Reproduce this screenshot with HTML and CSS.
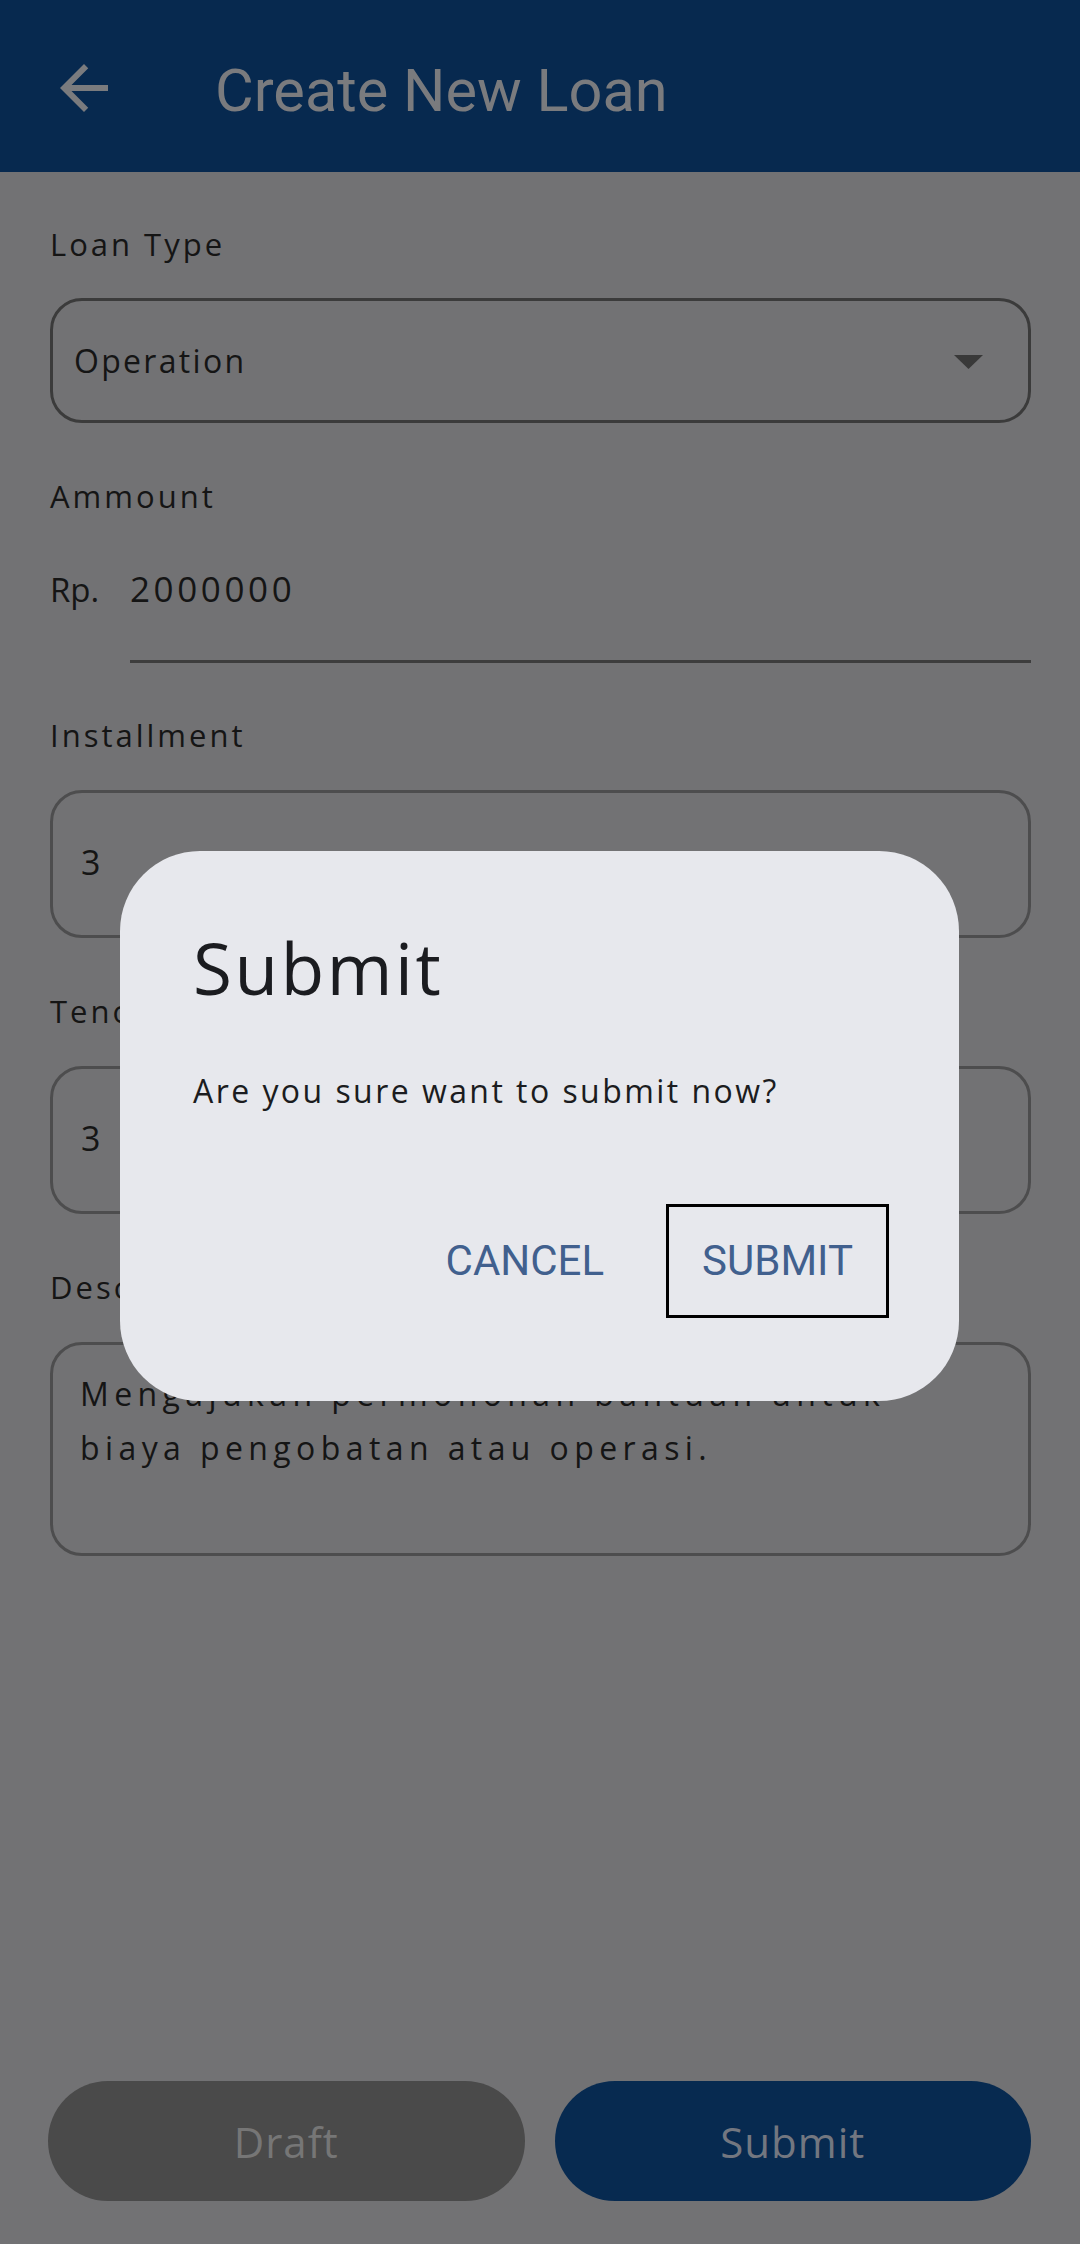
FILE: index.html
```html
<!DOCTYPE html>
<html lang="id">
<head>
<meta charset="utf-8">
<title>Create New Loan</title>
<link rel="stylesheet" href="styles.css">
</head>
<body>
<div class="screen">
  <header class="appbar">
    <svg class="back" viewBox="0 0 24 24" aria-hidden="true"><path d="M20 11H7.83l5.59-5.59L12 4l-8 8 8 8 1.41-1.41L7.83 13H20v-2z"/></svg>
    <h1 class="title">Create New Loan</h1>
  </header>

  <main class="form">
    <div class="label first">Loan Type</div>
    <div class="select">
      <span class="value">Operation</span>
      <svg class="caret" viewBox="0 0 29 14" aria-hidden="true"><polygon points="0,0 29,0 14.5,14"/></svg>
    </div>

    <div class="label">Ammount</div>
    <div class="amount">
      <span class="prefix">Rp.</span>
      <span class="amount-input">2000000</span>
    </div>

    <div class="label">Installment</div>
    <div class="field"><span class="num">3</span></div>

    <div class="label">Tenor</div>
    <div class="field"><span class="num">3</span></div>

    <div class="label">Description</div>
    <div class="textarea">Mengajukan permohonan bantuan untuk biaya pengobatan atau operasi.</div>
  </main>

  <footer class="actions">
    <button class="btn btn-draft">Draft</button>
    <button class="btn btn-submit">Submit</button>
  </footer>

  <div class="dialog" role="dialog">
    <h2 class="dialog-title">Submit</h2>
    <p class="dialog-text">Are you sure want to submit now?</p>
    <div class="dialog-actions">
      <button class="text-btn">CANCEL</button>
      <button class="text-btn outlined">SUBMIT</button>
    </div>
  </div>
</div>
</body>
</html>
```
FILE: styles.css
```css
* { box-sizing: border-box; }
html, body { margin: 0; padding: 0; }
body {
  width: 1080px;
  height: 2244px;
  overflow: hidden;
  background: #727274;
  font-family: "Open Sans", "Noto Sans", sans-serif;
}
.screen {
  position: relative;
  width: 1080px;
  height: 2244px;
  display: flex;
  flex-direction: column;
  background: #727274;
}

/* App bar */
.appbar {
  height: 172px;
  flex: none;
  background: #07294f;
  display: flex;
  align-items: center;
  padding-left: 48px;
}
.back {
  width: 72px;
  height: 72px;
  margin-top: 4px;
  fill: #7a7b7e;
}
.title {
  margin: 9px 0 0 95px;
  font-family: Roboto, "Liberation Sans", sans-serif;
  font-weight: 400;
  font-size: 59.5px;
  line-height: 70px;
  color: #7a7b7e;
}

/* Form */
.form {
  flex: 1;
  padding: 0 49px 0 50px;
  color: #151515;
}
.label {
  font-size: 31px;
  line-height: 40px;
  letter-spacing: 3px;
  margin-top: 53px;
  margin-bottom: 35px;
}
.label.first { margin-top: 52px; margin-bottom: 34px; }

.select {
  height: 125px;
  border: 3px solid #3b3b3b;
  border-radius: 32px;
  display: flex;
  align-items: center;
  justify-content: space-between;
  padding: 0 45px 0 21px;
}
.value {
  font-size: 32px;
  line-height: 40px;
  letter-spacing: 2.3px;
}
.caret {
  width: 29px;
  height: 14px;
  margin-top: 3px;
  fill: #393939;
}

.amount {
  display: flex;
  align-items: baseline;
  margin-top: 49px;
}
.prefix {
  width: 80px;
  font-size: 33px;
  line-height: 48px;
}
.amount-input {
  flex: 1;
  font-size: 35px;
  line-height: 48px;
  letter-spacing: 3.6px;
  padding-bottom: 47px;
  border-bottom: 3px solid #3d3d3d;
}
.amount + .label { margin-top: 52px; }

.field {
  height: 148px;
  border: 3px solid #4d4d4e;
  border-radius: 32px;
  display: flex;
  align-items: center;
  padding: 0 28px 4px 28px;
}
.num {
  font-size: 34px;
  line-height: 40px;
}

.textarea {
  height: 214px;
  border: 3px solid #4d4d4e;
  border-radius: 32px;
  padding: 22px 70px 0 27px;
  font-size: 32px;
  line-height: 54px;
  letter-spacing: 5.4px;
}

/* Bottom buttons */
.actions {
  flex: none;
  display: flex;
  gap: 30px;
  padding: 0 49px 43px 48px;
}
.btn {
  flex: 1;
  height: 120px;
  border: none;
  border-radius: 60px;
  font-family: "Open Sans", "Noto Sans", sans-serif;
  font-size: 42px;
  letter-spacing: 1px;
  padding: 0;
}
.btn-draft { background: #4a4a4a; color: #767676; }
.btn-submit { background: #072a50; color: #737780; }

/* Dialog */
.dialog {
  position: absolute;
  left: 120px;
  top: 851px;
  width: 839px;
  background: #e7e8ed;
  border-radius: 80px;
  padding: 72px 70px 83px 73px;
  color: #1b1c20;
}
.dialog-title {
  margin: 0;
  font-weight: 400;
  font-size: 71px;
  line-height: 90px;
  letter-spacing: 2.6px;
}
.dialog-text {
  margin: 54px 0 0;
  font-size: 32px;
  line-height: 48px;
  letter-spacing: 2.45px;
}
.dialog-actions {
  margin-top: 89px;
  display: flex;
  justify-content: flex-end;
  gap: 26px;
}
.text-btn {
  height: 114px;
  padding: 0 33px;
  background: transparent;
  border: 3px solid transparent;
  font-family: Roboto, "Liberation Sans", sans-serif;
  font-size: 42px;
  line-height: 1;
  color: #41608e;
}
.text-btn.outlined { border-color: #000; }
```
